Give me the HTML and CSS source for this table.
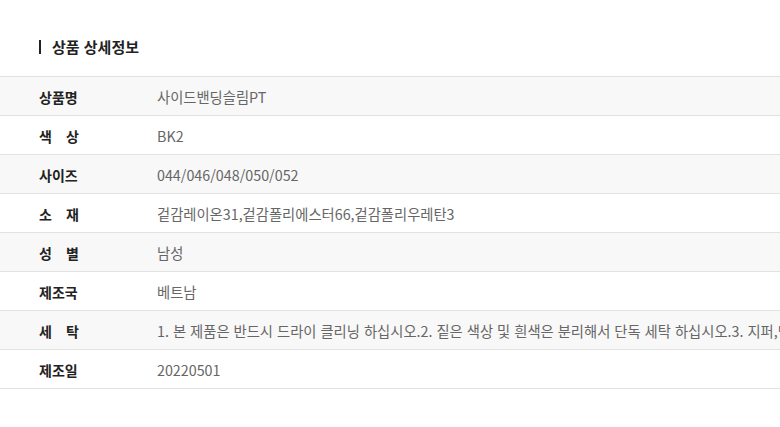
FILE: index.html
```html
<!DOCTYPE html>
<html lang="ko">
<head>
<meta charset="utf-8">
<link rel="stylesheet" href="styles.css">
</head>
<body>
<div class="page">
  <h2 class="title">상품 상세정보</h2>
  <div class="table">
    <div class="row alt"><div class="th"><span class="lbl">상품명</span></div><div class="td">사이드밴딩슬림PT</div></div>
    <div class="row"><div class="th"><span class="lbl">색 상</span></div><div class="td">BK2</div></div>
    <div class="row alt"><div class="th"><span class="lbl">사이즈</span></div><div class="td">044/046/048/050/052</div></div>
    <div class="row"><div class="th"><span class="lbl">소 재</span></div><div class="td">겉감레이온31,겉감폴리에스터66,겉감폴리우레탄3</div></div>
    <div class="row alt"><div class="th"><span class="lbl">성 별</span></div><div class="td">남성</div></div>
    <div class="row"><div class="th"><span class="lbl">제조국</span></div><div class="td">베트남</div></div>
    <div class="row alt"><div class="th"><span class="lbl">세 탁</span></div><div class="td">1. 본 제품은 반드시 드라이 클리닝 하십시오.2. 짙은 색상 및 흰색은 분리해서 단독 세탁 하십시오.3. 지퍼,단추 등 부자재는 잠근 후 세탁 하십시오.</div></div>
    <div class="row"><div class="th"><span class="lbl">제조일</span></div><div class="td">20220501</div></div>
  </div>
</div>
</body>
</html>
```

FILE: styles.css
```css
html, body {
  margin: 0;
  padding: 0;
  background: #fff;
  overflow: hidden;
}
body {
  font-family: "Noto Sans CJK KR", "Noto Sans", sans-serif;
  color: #222;
}
.page {
  width: 780px;
  overflow: hidden;
  padding-top: 40px;
}
.title {
  margin: 0 0 22px 39px;
  padding-left: 11px;
  border-left: 2px solid #222;
  font-size: 15px;
  font-weight: 700;
  line-height: 14px;
  height: 14px;
  display: flex;
  align-items: center;
  color: #222;
}
.table {
  border-top: 1px solid #e2e2e2;
}
.row {
  display: flex;
  height: 38px;
  border-bottom: 1px solid #e2e2e2;
  align-items: center;
}
.row.alt {
  background: #f8f8f8;
}
.th {
  width: 157px;
  flex: none;
  padding-left: 39px;
  box-sizing: border-box;
}
.lbl {
  display: inline-block;
  width: 40px;
  font-size: 14px;
  font-weight: 700;
  color: #222;
  text-align: justify;
  text-align-last: justify;
  white-space: normal;
}
.td {
  flex: 1;
  min-width: 0;
  overflow: hidden;
  white-space: nowrap;
  font-size: 14.3px;
  color: #666;
  font-weight: 400;
}
```
